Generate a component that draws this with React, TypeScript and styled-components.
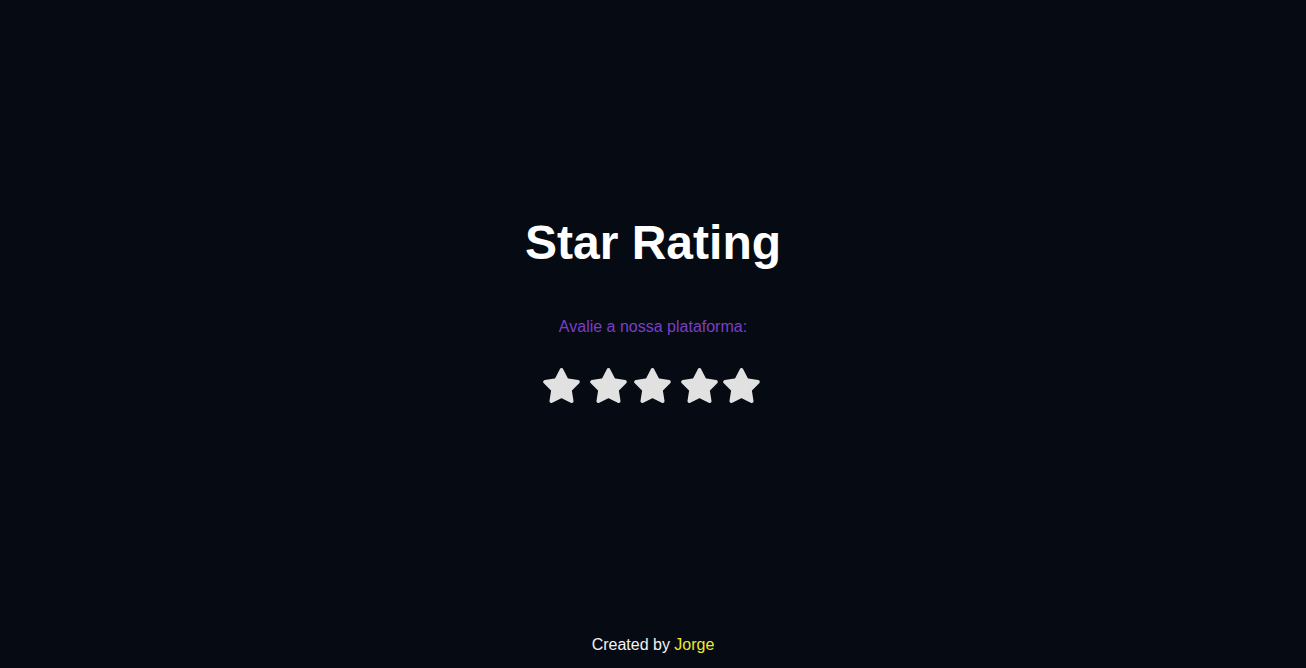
import React from "react";
import styled, { createGlobalStyle } from "styled-components";

const GlobalStyle = createGlobalStyle`
  html, body {
    margin: 0;
    padding: 0;
    background: #060a12;
  }
  body {
    font-family: "Liberation Sans", Arial, sans-serif;
  }
`;

const Page = styled.div`
  min-height: 100vh;
  display: flex;
  flex-direction: column;
  align-items: center;
  background: #060a12;
  box-sizing: border-box;
`;

const Main = styled.main`
  display: flex;
  flex-direction: column;
  align-items: center;
  padding-top: 215px;
`;

const Title = styled.h1`
  margin: 0;
  font-size: 48px;
  line-height: 56px;
  font-weight: 700;
  color: #ffffff;
`;

const Prompt = styled.p`
  margin: 47px 0 0;
  font-size: 16px;
  line-height: 18px;
  color: #7a3fc6;
`;

const StarRow = styled.div`
  display: flex;
  align-items: center;
  margin-top: 31px;
  padding-right: 3px;
`;

const StarButton = styled.button<{ $offset: number }>`
  display: block;
  padding: 0;
  margin: 0 0 0 ${(p) => p.$offset}px;
  border: none;
  background: none;
  cursor: pointer;
  width: 37px;
  height: 37px;
  svg {
    display: block;
  }
`;

const Footer = styled.footer`
  margin-top: auto;
  padding-bottom: 14px;
  font-size: 16px;
  line-height: 18px;
  color: #f2f2f2;
`;

const Author = styled.span`
  color: #eaea2e;
`;

function starPoints(cx: number, cy: number, R: number, r: number) {
  const pts: string[] = [];
  for (let i = 0; i < 10; i++) {
    const rad = i % 2 === 0 ? R : r;
    const a = -Math.PI / 2 + (i * Math.PI) / 5;
    pts.push(`${(cx + rad * Math.cos(a)).toFixed(2)},${(cy + rad * Math.sin(a)).toFixed(2)}`);
  }
  return pts.join(" ");
}

const Star = () => (
  <svg width="37" height="37" viewBox="0 0 37 37">
    <polygon
      points={starPoints(18.5, 20.2, 17.2, 8.8)}
      fill="#e1e1e1"
      stroke="#e1e1e1"
      strokeWidth={3.8}
      strokeLinejoin="round"
    />
  </svg>
);

const offsets = [0, 10, 7, 10, 5];

export default function App() {
  return (
    <>
      <GlobalStyle />
      <Page>
        <Main>
          <Title>Star Rating</Title>
          <Prompt>Avalie a nossa plataforma:</Prompt>
          <StarRow>
            {offsets.map((o, i) => (
              <StarButton key={i} $offset={o} aria-label={`${i + 1} estrelas`}>
                <Star />
              </StarButton>
            ))}
          </StarRow>
        </Main>
        <Footer>
          Created by <Author>Jorge</Author>
        </Footer>
      </Page>
    </>
  );
}
